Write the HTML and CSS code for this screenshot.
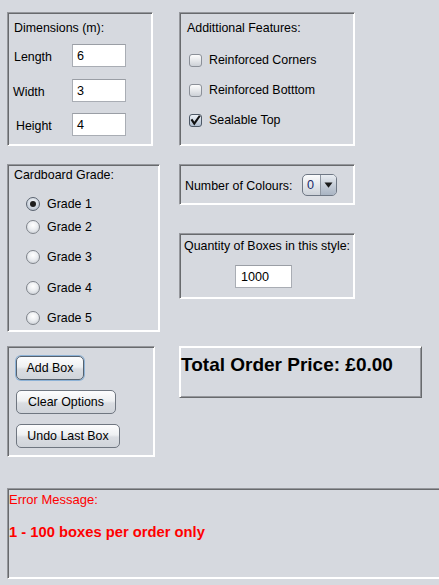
FILE: index.html
```html
<!DOCTYPE html>
<html>
<head>
<meta charset="utf-8">
<link rel="stylesheet" href="styles.css">
</head>
<body>
<div class="app">
  <div class="row row-top">
    <section class="panel lowered dims">
      <div class="title">Dimensions (m):</div>
      <div class="field-row r1"><span class="lbl l-length">Length</span><span class="field">6</span></div>
      <div class="field-row r2"><span class="lbl l-width">Width</span><span class="field">3</span></div>
      <div class="field-row r3"><span class="lbl l-height">Height</span><span class="field">4</span></div>
    </section>
    <section class="panel lowered features">
      <div class="title">Addittional Features:</div>
      <div class="check-row c1"><span class="checkbox"></span><span>Reinforced Corners</span></div>
      <div class="check-row c2"><span class="checkbox"></span><span>Reinforced Botttom</span></div>
      <div class="check-row c3"><span class="checkbox checked"><svg viewBox="0 0 13 13" width="13" height="13"><path d="M3 6.2 L5.3 9.6 L10.2 2.6" fill="none" stroke="#111" stroke-width="2.1" stroke-linecap="square" stroke-linejoin="miter"/></svg></span><span>Sealable Top</span></div>
    </section>
  </div>

  <div class="row row-mid">
    <section class="panel lowered grade">
      <div class="title">Cardboard Grade:</div>
      <div class="radio-row g1"><span class="radio selected"></span><span>Grade 1</span></div>
      <div class="radio-row g2"><span class="radio"></span><span>Grade 2</span></div>
      <div class="radio-row g3"><span class="radio"></span><span>Grade 3</span></div>
      <div class="radio-row g4"><span class="radio"></span><span>Grade 4</span></div>
      <div class="radio-row g5"><span class="radio"></span><span>Grade 5</span></div>
    </section>
    <div class="col">
      <section class="panel lowered colours">
        <span class="lbl-colours">Number of Colours:</span>
        <span class="combo"><span class="combo-val">0</span><span class="combo-btn"><svg viewBox="0 0 9 6" width="9" height="6"><path d="M0.5 0.5 H8.5 L4.5 5.8 Z" fill="#1a1a1a"/></svg></span></span>
      </section>
      <section class="panel lowered quantity">
        <div class="title center">Quantity of Boxes in this style:</div>
        <span class="field qty">1000</span>
      </section>
    </div>
  </div>

  <div class="row row-bot">
    <section class="panel lowered actions">
      <button class="btn focused w-add">Add Box</button>
      <button class="btn w-clear">Clear Options</button>
      <button class="btn w-undo">Undo Last Box</button>
    </section>
    <section class="panel raised total">
      <div class="total-text">Total Order Price: £0.00</div>
    </section>
  </div>

  <section class="panel lowered error">
    <div class="err-title">Error Message:</div>
    <div class="err-msg">1 - 100 boxes per order only</div>
  </section>
</div>
</body>
</html>
```

FILE: styles.css
```css
html, body {
  margin: 0;
  padding: 0;
  overflow: hidden;
  background: #d6d9df;
}
body {
  width: 439px;
  height: 585px;
  font-family: "Liberation Sans", Arial, sans-serif;
  font-size: 12.4px;
  color: #000;
}
.app {
  padding: 12px 0 0 7px;
}
.row {
  display: grid;
  grid-template-columns: 172px auto;
  align-items: start;
}
.row-mid { margin-top: 18px; }
.row-bot { margin-top: 14px; }

.panel {
  box-sizing: border-box;
  border: 1px solid;
}
.lowered {
  border-color: #95979c #ffffff #ffffff #95979c;
  box-shadow: inset 1px 1px 0 #686a6d, inset -1px -1px 0 #ffffff;
}
.raised {
  border-color: #ffffff #686a6d #686a6d #ffffff;
  box-shadow: inset 1px 1px 0 #ffffff, inset -1px -1px 0 #95979c;
}

.title {
  line-height: 16px;
  margin-left: 6px;
  white-space: nowrap;
}
.title.center {
  margin-left: 0;
  text-align: center;
}

/* Dimensions */
.dims {
  width: 146px;
  height: 134px;
  padding-top: 7px;
}
.field-row {
  display: grid;
  grid-template-columns: 64px 54px;
  align-items: center;
  height: 23px;
}
.field-row.r1 { margin-top: 8px; }
.field-row.r2 { margin-top: 12px; }
.field-row.r3 { margin-top: 11px; }
.lbl { padding-top: 2px; }
.l-length { padding-left: 6px; }
.l-width { padding-left: 5px; }
.l-height { padding-left: 8px; }

.field {
  display: block;
  box-sizing: border-box;
  height: 23px;
  background: #fff;
  border: 1px solid #a9adb4;
  border-top-color: #9a9ea5;
  padding-left: 4px;
  line-height: 22px;
  font-size: 12.6px;
}

/* Features */
.features {
  width: 176px;
  height: 134px;
  padding-top: 7px;
}
.features .title { margin-left: 7px; }
.check-row {
  display: flex;
  align-items: center;
  gap: 7px;
  height: 20px;
  margin-left: 9px;
  white-space: nowrap;
}
.check-row.c1 { margin-top: 14px; }
.check-row.c2, .check-row.c3 { margin-top: 10px; }
.checkbox {
  box-sizing: border-box;
  width: 13px;
  height: 13px;
  border: 1px solid #8b9098;
  border-radius: 3px;
  background: linear-gradient(#fdfdfd, #e6e8eb 50%, #cdd1d7);
  position: relative;
}
.checkbox.checked {
  border-color: #4d5866;
  background: linear-gradient(#eef2f7, #c8d3e0 60%, #aebccd);
}
.checkbox svg {
  position: absolute;
  left: -1px;
  top: -1px;
}

/* Grade */
.grade {
  width: 153px;
  height: 168px;
  padding-top: 2px;
}
.radio-row {
  display: flex;
  align-items: center;
  gap: 7px;
  height: 20px;
  margin-left: 18px;
}
.radio-row.g1 { margin-top: 11px; }
.radio-row.g2 { margin-top: 3px; }
.radio-row.g3 { margin-top: 10px; }
.radio-row.g4 { margin-top: 11px; }
.radio-row.g5 { margin-top: 10px; }
.radio {
  box-sizing: border-box;
  width: 14px;
  height: 14px;
  border-radius: 50%;
  border: 1px solid #7f848b;
  background: radial-gradient(circle at 50% 35%, #ffffff, #eceef1 45%, #c3c8cf);
  position: relative;
}
.radio.selected {
  border-color: #5b6470;
  background: radial-gradient(circle at 50% 35%, #f4f6f9, #d3dae3 50%, #a9b4c2);
}
.radio.selected::after {
  content: "";
  position: absolute;
  left: 3px;
  top: 3px;
  width: 6px;
  height: 6px;
  border-radius: 50%;
  background: #1e1e1e;
}

/* right column */
.col {
  display: flex;
  flex-direction: column;
}
.colours {
  width: 176px;
  height: 41px;
  display: flex;
  align-items: center;
  padding-left: 5px;
}
.lbl-colours {
  width: 117px;
  white-space: nowrap;
  padding-top: 3px;
}
.combo {
  box-sizing: border-box;
  width: 35px;
  height: 22px;
  display: flex;
  border: 1px solid #6e7784;
  border-radius: 5px;
  background: linear-gradient(#fbfcfd, #e4e7eb 50%, #cdd2d9);
  overflow: hidden;
}
.combo-val {
  width: 17px;
  padding-left: 4px;
  box-sizing: border-box;
  line-height: 20px;
  color: #1c2a6b;
  font-size: 12.6px;
}
.combo-btn {
  flex: 1;
  border-left: 1px solid #8e96a1;
  display: flex;
  align-items: center;
  justify-content: center;
  background: linear-gradient(#e9edf2, #c3cbd6 55%, #a9b4c3);
}

.quantity {
  width: 176px;
  height: 66px;
  margin-top: 28px;
  padding-top: 4px;
}
.field.qty {
  width: 57px;
  margin-top: 11px;
  margin-left: 55px;
  padding-left: 5px;
}

/* Actions */
.actions {
  width: 148px;
  height: 111px;
  padding-top: 9px;
  padding-left: 8px;
  display: flex;
  flex-direction: column;
  align-items: flex-start;
  gap: 10px;
}
.btn {
  box-sizing: border-box;
  height: 24px;
  padding: 0;
  font-family: "Liberation Sans", Arial, sans-serif;
  font-size: 12.4px;
  color: #000;
  border: 1px solid #6f7680;
  border-radius: 5px;
  background: linear-gradient(#fdfdfe, #eef0f2 45%, #dadde2 55%, #d0d4da);
  line-height: 22px;
  text-align: center;
}
.btn.focused {
  border-color: #56626f;
  box-shadow: 0 0 0 1px #8db2d6;
}
.w-add { width: 68px; }
.w-clear { width: 100px; }
.w-undo { width: 104px; }

/* Total */
.total {
  width: 243px;
  height: 52px;
  padding: 7px 0 0 1px;
}
.total-text {
  font-weight: bold;
  font-size: 19px;
  line-height: 22px;
  white-space: nowrap;
}

/* Error */
.error {
  width: 445px;
  height: 91px;
  margin-top: 31px;
  padding: 3px 0 0 1px;
  color: #ff0000;
}
.err-title {
  font-size: 13px;
  line-height: 16px;
}
.err-msg {
  margin-top: 15px;
  font-size: 14.75px;
  font-weight: bold;
  line-height: 18px;
}
```
